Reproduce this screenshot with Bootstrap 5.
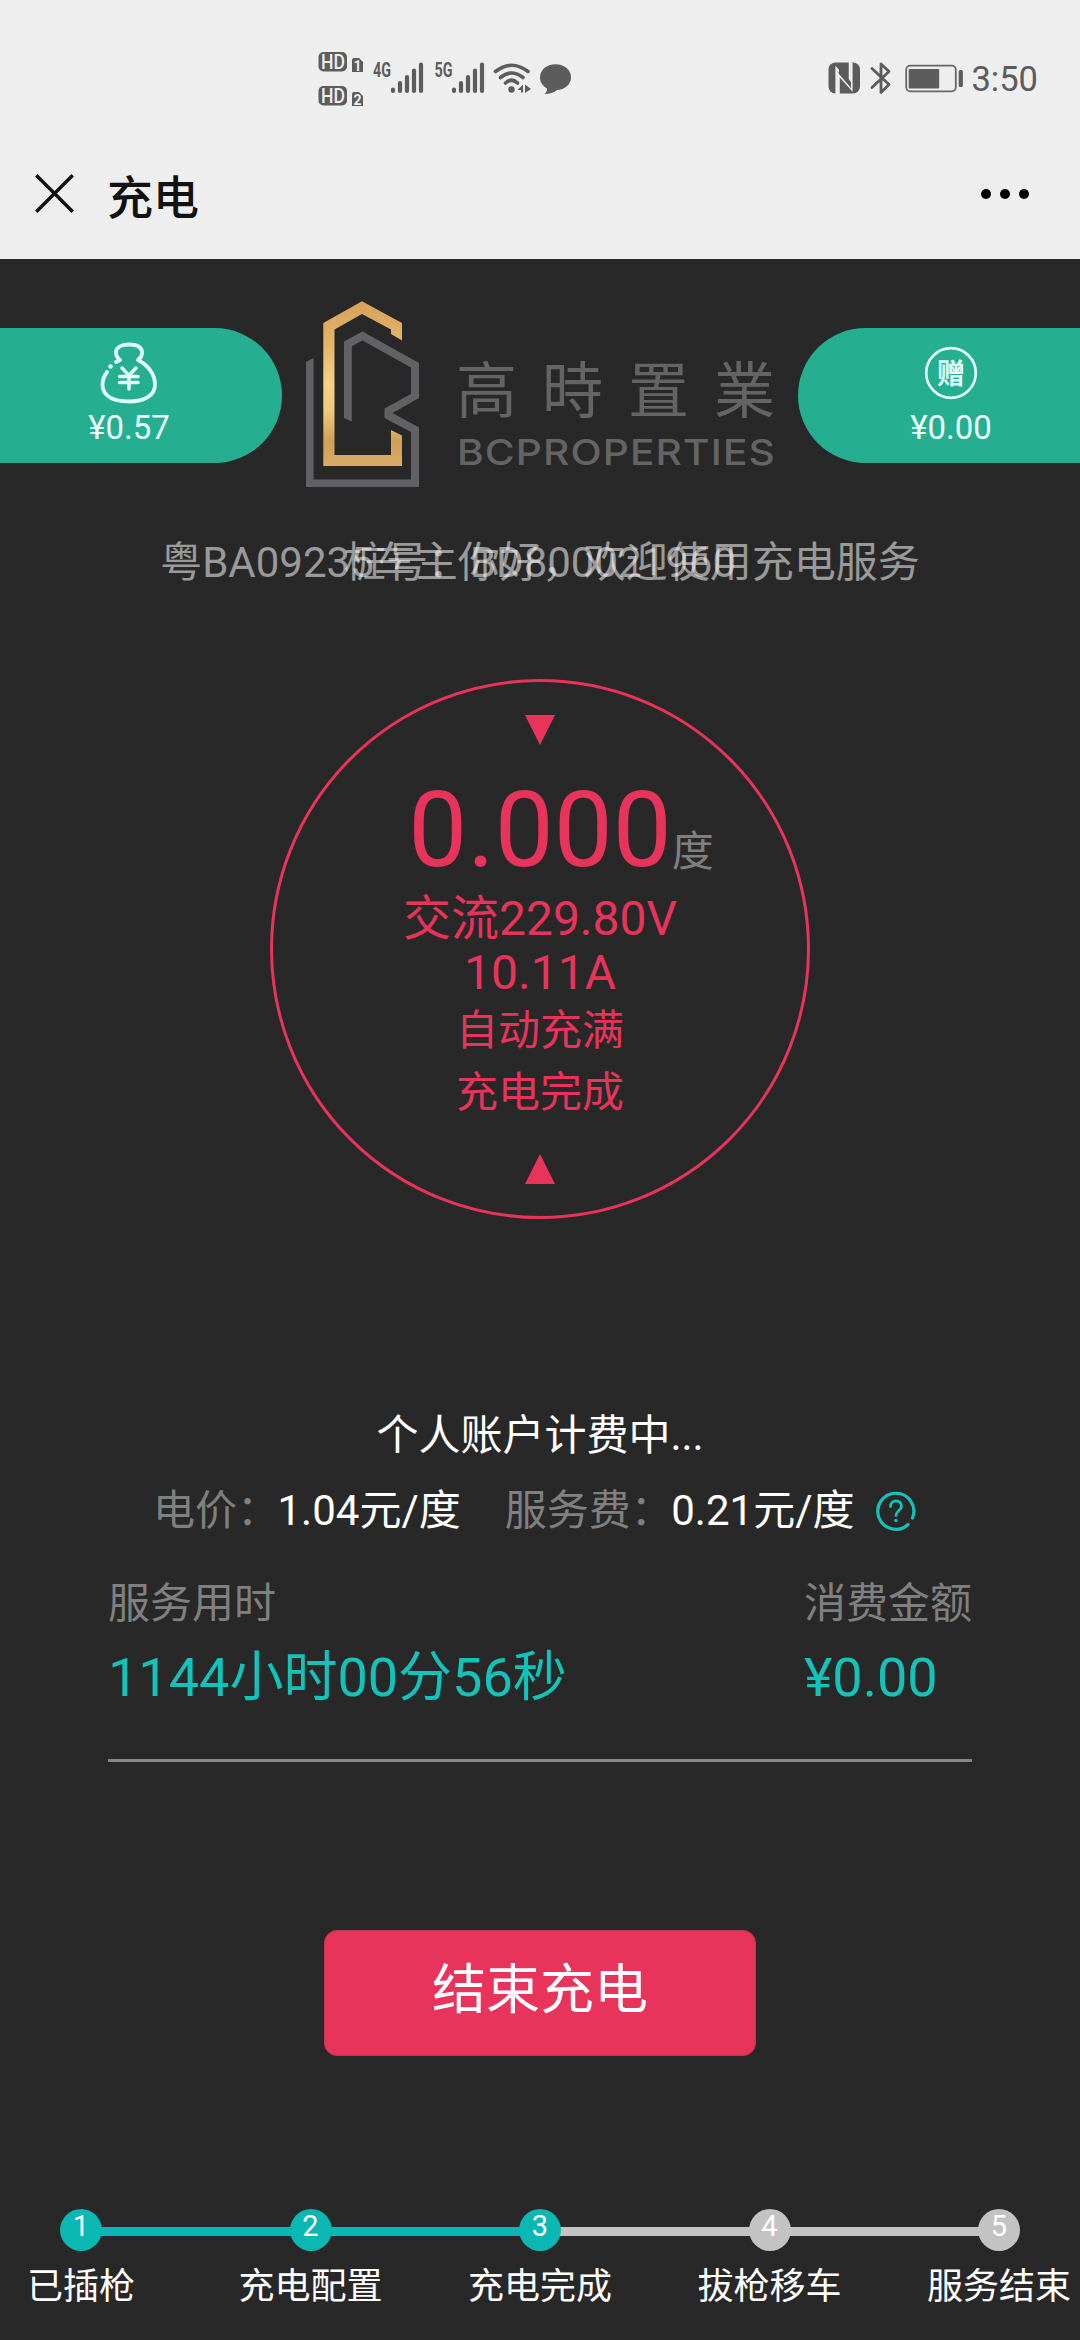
<!DOCTYPE html>
<html lang="zh-CN">
<head>
<meta charset="utf-8">
<meta name="viewport" content="width=device-width, initial-scale=1">
<title>充电</title>
<link rel="stylesheet" href="https://cdn.jsdelivr.net/npm/bootstrap@5.3.0/dist/css/bootstrap.min.css">
<style>
  :root { --teal:#0bb7b2; --pink:#e8335b; --jade:#26ae90; --ink:#5c5c5c; }
  body { background:#282828; color:#fff; font-family:Roboto,"Noto Sans CJK SC",sans-serif; font-size:42px; line-height:63px; min-height:2340px; overflow-x:hidden; }
  svg { display:block; flex:none; }
  .topbar { background:#eee; height:259px; color:#111; }
  .statusbar { height:129px; padding:47px 42px 0 313px; color:var(--ink); }
  .clock { font-size:34.5px; line-height:40px; padding-top:12px; margin-left:7px; }
  .titlebar { height:130px; padding:0 50px 0 34px; }
  .page-title { font-size:46px; font-weight:500; line-height:60px; margin-left:31px; padding-top:7px; }
  .hero { padding-top:42px; height:230px; }
  .wallet { width:282px; height:135px; background:var(--jade); margin-top:27px; font-size:33px; line-height:40px; color:#e6fffb; padding-top:14px; }
  .wallet-l { border-radius:0 68px 68px 0; padding-right:24px; }
  .wallet-r { border-radius:68px 0 0 68px; padding-left:24px; }
  .balance { margin-top:3px; }
  .greeting { margin-top:42px; color:rgba(255,255,255,.53); }
  .ring { width:540px; height:540px; border:3px solid var(--pink); margin-top:85px; padding-top:33px; color:var(--pink); }
  .kwh { font-size:105px; line-height:123px; height:123px; margin-top:24px; }
  .kwh-unit { font-size:42px; line-height:1; color:#808080; margin-right:-42px; }
  .meter { font-size:48px; line-height:54px; }
  .mode { line-height:62px; }
  .account { margin-top:185px; }
  .dim { color:#808080; }
  .rates { margin-top:12px; padding-left:153px; }
  .rate-value { margin-left:-1.5px; }
  .rate-gap { margin-left:44px; }
  .hint { margin-left:22px; }
  .usage { margin:30px 108px 0; padding-bottom:44px; border-bottom:3px solid #888; }
  .figure-text { font-size:54px; line-height:75px; margin-top:5px; color:#13c2b9; }
  .btn-stop { width:432px; height:126px; margin-top:168px; background:var(--pink); border:1px solid #c23456; border-radius:13px; font-size:54px; line-height:75px; color:#fff; padding:0 0 6px; }
  .steps { margin-top:153px; }
  .step { width:162px; font-size:36px; line-height:48px; }
  .dot { width:42px; height:42px; background:#c3c3c3; font-size:29px; line-height:34px; z-index:1; margin-bottom:12px; }
  .done .dot { background:var(--teal); }
  .step + .step::before { content:""; position:absolute; top:18px; right:50%; width:229.5px; height:9px; background:#c3c3c3; }
  .step.done + .step.done::before { background:var(--teal); }
</style>
</head>
<body>
<header class="topbar">
  <div class="statusbar d-flex justify-content-between align-items-start">
    <svg width="262" height="64" viewBox="313 47 262 64" fill="#5c5c5c" font-family="Roboto" font-weight="700">
      <rect x="318.500" y="52" width="28.500" height="19.500" rx="5"/>
      <rect x="318.500" y="86" width="28.500" height="19.500" rx="5"/>
      <g fill="#eee" font-size="20" font-weight="500">
        <text x="321" y="68.500" textLength="24" lengthAdjust="spacingAndGlyphs">HD</text>
        <text x="321" y="102.500" textLength="24" lengthAdjust="spacingAndGlyphs">HD</text>
      </g>
      <path d="M352 60q0-2 2-2h5l4 4v10h-11zM352 94q0-2 2-2h5l4 4v10h-11z"/>
      <g fill="#eee" font-size="14"><text x="353.500" y="70.500">1</text><text x="353.500" y="104.500">2</text></g>
      <g font-size="19.500">
        <text x="373" y="76.500" textLength="18" lengthAdjust="spacingAndGlyphs">4G</text>
        <text x="434.500" y="76.500" textLength="18" lengthAdjust="spacingAndGlyphs">5G</text>
      </g>
      <g stroke="#5c5c5c" stroke-width="4.200" stroke-linecap="round">
        <path d="M393 89.500v1.500M400 83v8M407 77v14M414 70.500v20.500M421 64.500v26.500"/>
        <path d="M454 89.500v1.500M461 83v8M468 77v14M475 70.500v20.500M482 64.500v26.500"/>
      </g>
      <g fill="none" stroke="#5c5c5c" stroke-width="3.600" stroke-linecap="round">
        <path d="M495.500 71.500q16-12.500 32.500 0M500.500 77.500q11-9 22.500 0M505.500 83q6-5.500 12 0"/>
      </g>
      <circle cx="511.500" cy="89.500" r="3.200"/>
      <path d="M523 84.500v8h-2v-2.500h-3.500zM525 84.500l6 4.500-6 4z"/>
      <path d="M555.500 64.300c9 0 15.500 5.700 15.500 13s-6.500 12.500-14 12.700c-3 2.500-7.500 4-12.500 4 2-1.500 2.600-3.500 2.500-5.500-4.500-2.400-7-6.500-7-11.200 0-7.300 6.500-13 15.500-13z"/>
    </svg>
    <div class="d-flex">
      <svg width="138" height="64" viewBox="825 47 138 64" fill="#5c5c5c">
        <rect x="827.500" y="62.500" width="31.500" height="31" rx="7"/>
        <path d="M835.500 94V68.500l14 15.500V62M837 94V74l13.500 15V63" fill="none" stroke="#eee" stroke-width="2.200"/>
        <path d="M837.500 74.500v19.500M849 62v19" stroke="#eee" stroke-width="2.500"/>
        <path d="M838 68l12 14v6L838 74z"/>
        <path d="M871 68.500l17 16-8 8V64l8 7.500-17 16" fill="none" stroke="#5c5c5c" stroke-width="2.800" stroke-linecap="round" stroke-linejoin="round"/>
        <rect x="905.200" y="65.700" width="49.600" height="25.600" rx="4" fill="none" stroke="#666" stroke-width="1.800"/>
        <rect x="907.700" y="69" width="30.500" height="19.500" rx="1"/>
        <rect x="957.700" y="70" width="4.200" height="17" rx="1.500"/>
      </svg>
      <div class="clock">3:50</div>
    </div>
  </div>
  <div class="titlebar d-flex align-items-center">
    <svg width="42" height="42" viewBox="0 0 42 42"><path d="M3.500 3.500l34 34M37.500 3.500l-34 34" stroke="#111" stroke-width="3.400" stroke-linecap="square"/></svg>
    <div class="page-title">充电</div>
    <svg class="ms-auto" width="50" height="12" viewBox="0 0 50 12"><circle cx="6" cy="6" r="5"/><circle cx="25" cy="6" r="5"/><circle cx="44" cy="6" r="5"/></svg>
  </div>
</header>

<main>
  <section class="hero d-flex justify-content-between align-items-start">
    <div class="wallet wallet-l d-flex flex-column align-items-center">
      <svg width="60" height="63" viewBox="99 342 60 63" fill="none" stroke="#e0fffa" stroke-width="3.800" stroke-linecap="round" stroke-linejoin="round">
        <path d="M107 372q-4.500 6-4.500 13c0 11 11 16.500 26.500 16.500s26-6 26-17c0-10-7-19.500-17-24.500 3-2.500 4.500-5.500 4-8.500-.8-4.500-6-7-13-7s-12.300 2.500-13 7c-.4 3 1 6 4 8.500l-4 2"/>
        <path d="M110.500 366.500h.1" stroke-width="4.500"/>
        <path d="M122 368l7 7.500 7-7.500M129 376v13M119.500 376.500h18.500M119.500 382.500h18.500" stroke-width="3.500"/>
      </svg>
      <div class="balance">¥0.57</div>
    </div>
    <svg width="516" height="188" viewBox="282 301 516 188">
      <defs><linearGradient id="gold" x1="0" y1="0" x2="0" y2="1"><stop offset="0" stop-color="#d6a25c"/><stop offset=".25" stop-color="#e3b468"/><stop offset=".5" stop-color="#f5d184"/><stop offset=".66" stop-color="#f0c97d"/><stop offset=".85" stop-color="#d19f55"/><stop offset="1" stop-color="#d8ab66"/></linearGradient></defs>
      <path fill="url(#gold)" d="M323.300 323L362 301.300 402 323v17.500L391 334v-4.500L362 314l-27.500 15.500V455H391v-25l11 5.500V466h-78.700z"/>
      <path fill="#626266" d="M344 341.500l18.500-10 56.500 31.500v35L392.500 413l26.500 14.500V487H306V362l7.500-4v121.500H411V432l-26.500-14v-9.500L411 394v-26.500l-48.500-27-10.700 5.700v75.300l-7.800-3.500z"/>
      <g fill="#646464">
        <text x="456" y="413" font-family="Noto Sans CJK TC" font-size="61" letter-spacing="25">高時置<tspan letter-spacing="0">業</tspan></text>
        <text x="457" y="465" font-family="Inter" font-weight="500" font-size="36" textLength="319" lengthAdjust="spacingAndGlyphs" letter-spacing="1">BCPROPERTIES</text>
      </g>
    </svg>
    <div class="wallet wallet-r d-flex flex-column align-items-center">
      <svg width="60" height="63" viewBox="921 342 60 63">
        <circle cx="951" cy="373" r="24.800" fill="none" stroke="#e0fffa" stroke-width="2.700"/>
        <text x="951" y="383.500" text-anchor="middle" font-size="28" font-weight="700" fill="#e0fffa" font-family="Noto Sans CJK SC">赠</text>
      </svg>
      <div class="balance">¥0.00</div>
    </div>
  </section>

  <section class="greeting position-relative text-center text-nowrap">
    <div>粤BA09235车主你好，欢迎使用充电服务</div>
    <div class="position-absolute top-0 start-0 w-100">桩号：BD800021960</div>
  </section>

  <section class="ring rounded-circle mx-auto d-flex flex-column align-items-center text-nowrap">
    <svg width="30" height="30" viewBox="0 0 30 30"><path d="M0 0h30L15 30z" fill="#e8335b"/></svg>
    <div class="kwh">0.000<span class="kwh-unit">度</span></div>
    <div class="meter">交流229.80V</div>
    <div class="meter">10.11A</div>
    <div class="mode">自动充满</div>
    <div class="mode">充电完成</div>
    <svg class="mt-auto mb-0" width="30" height="62" viewBox="0 0 30 62"><path d="M15 0l15 30H0z" fill="#e8335b"/></svg>
  </section>

  <div class="account text-center">个人账户计费中...</div>
  <div class="rates d-flex align-items-center text-nowrap">
    <span class="dim">电价：</span><span class="rate-value">1.04元/度</span>
    <span class="dim rate-gap">服务费：</span><span class="rate-value">0.21元/度</span>
    <svg class="hint" width="40" height="40" viewBox="0 0 40 40" fill="none" stroke="#13c2b9" stroke-width="3.200" stroke-linecap="round">
      <path d="M32 33.500A18 18 0 1 1 36.500 27"/>
      <path d="M14.500 15.500c0-3.500 2.300-5.500 5.500-5.500s5.500 2 5.500 5.200c0 4.300-5.500 4.500-5.500 9.300" stroke-width="2.800"/>
      <circle cx="20" cy="29.500" r="1.800" fill="#13c2b9" stroke="none"/>
    </svg>
  </div>

  <section class="usage d-flex justify-content-between text-nowrap">
    <div><div class="dim">服务用时</div><div class="figure-text">1144小时00分56秒</div></div>
    <div><div class="dim">消费金额</div><div class="figure-text">¥0.00</div></div>
  </section>

  <button type="button" class="btn btn-stop d-block mx-auto">结束充电</button>

  <section class="steps d-flex justify-content-between text-nowrap">
    <div class="step done position-relative d-flex flex-column align-items-center"><div class="dot rounded-circle text-center">1</div>已插枪</div>
    <div class="step done position-relative d-flex flex-column align-items-center"><div class="dot rounded-circle text-center">2</div>充电配置</div>
    <div class="step done position-relative d-flex flex-column align-items-center"><div class="dot rounded-circle text-center">3</div>充电完成</div>
    <div class="step position-relative d-flex flex-column align-items-center"><div class="dot rounded-circle text-center">4</div>拔枪移车</div>
    <div class="step position-relative d-flex flex-column align-items-center"><div class="dot rounded-circle text-center">5</div>服务结束</div>
  </section>
</main>
<script src="https://cdn.jsdelivr.net/npm/bootstrap@5.3.0/dist/js/bootstrap.bundle.min.js"></script>
</body>
</html>
